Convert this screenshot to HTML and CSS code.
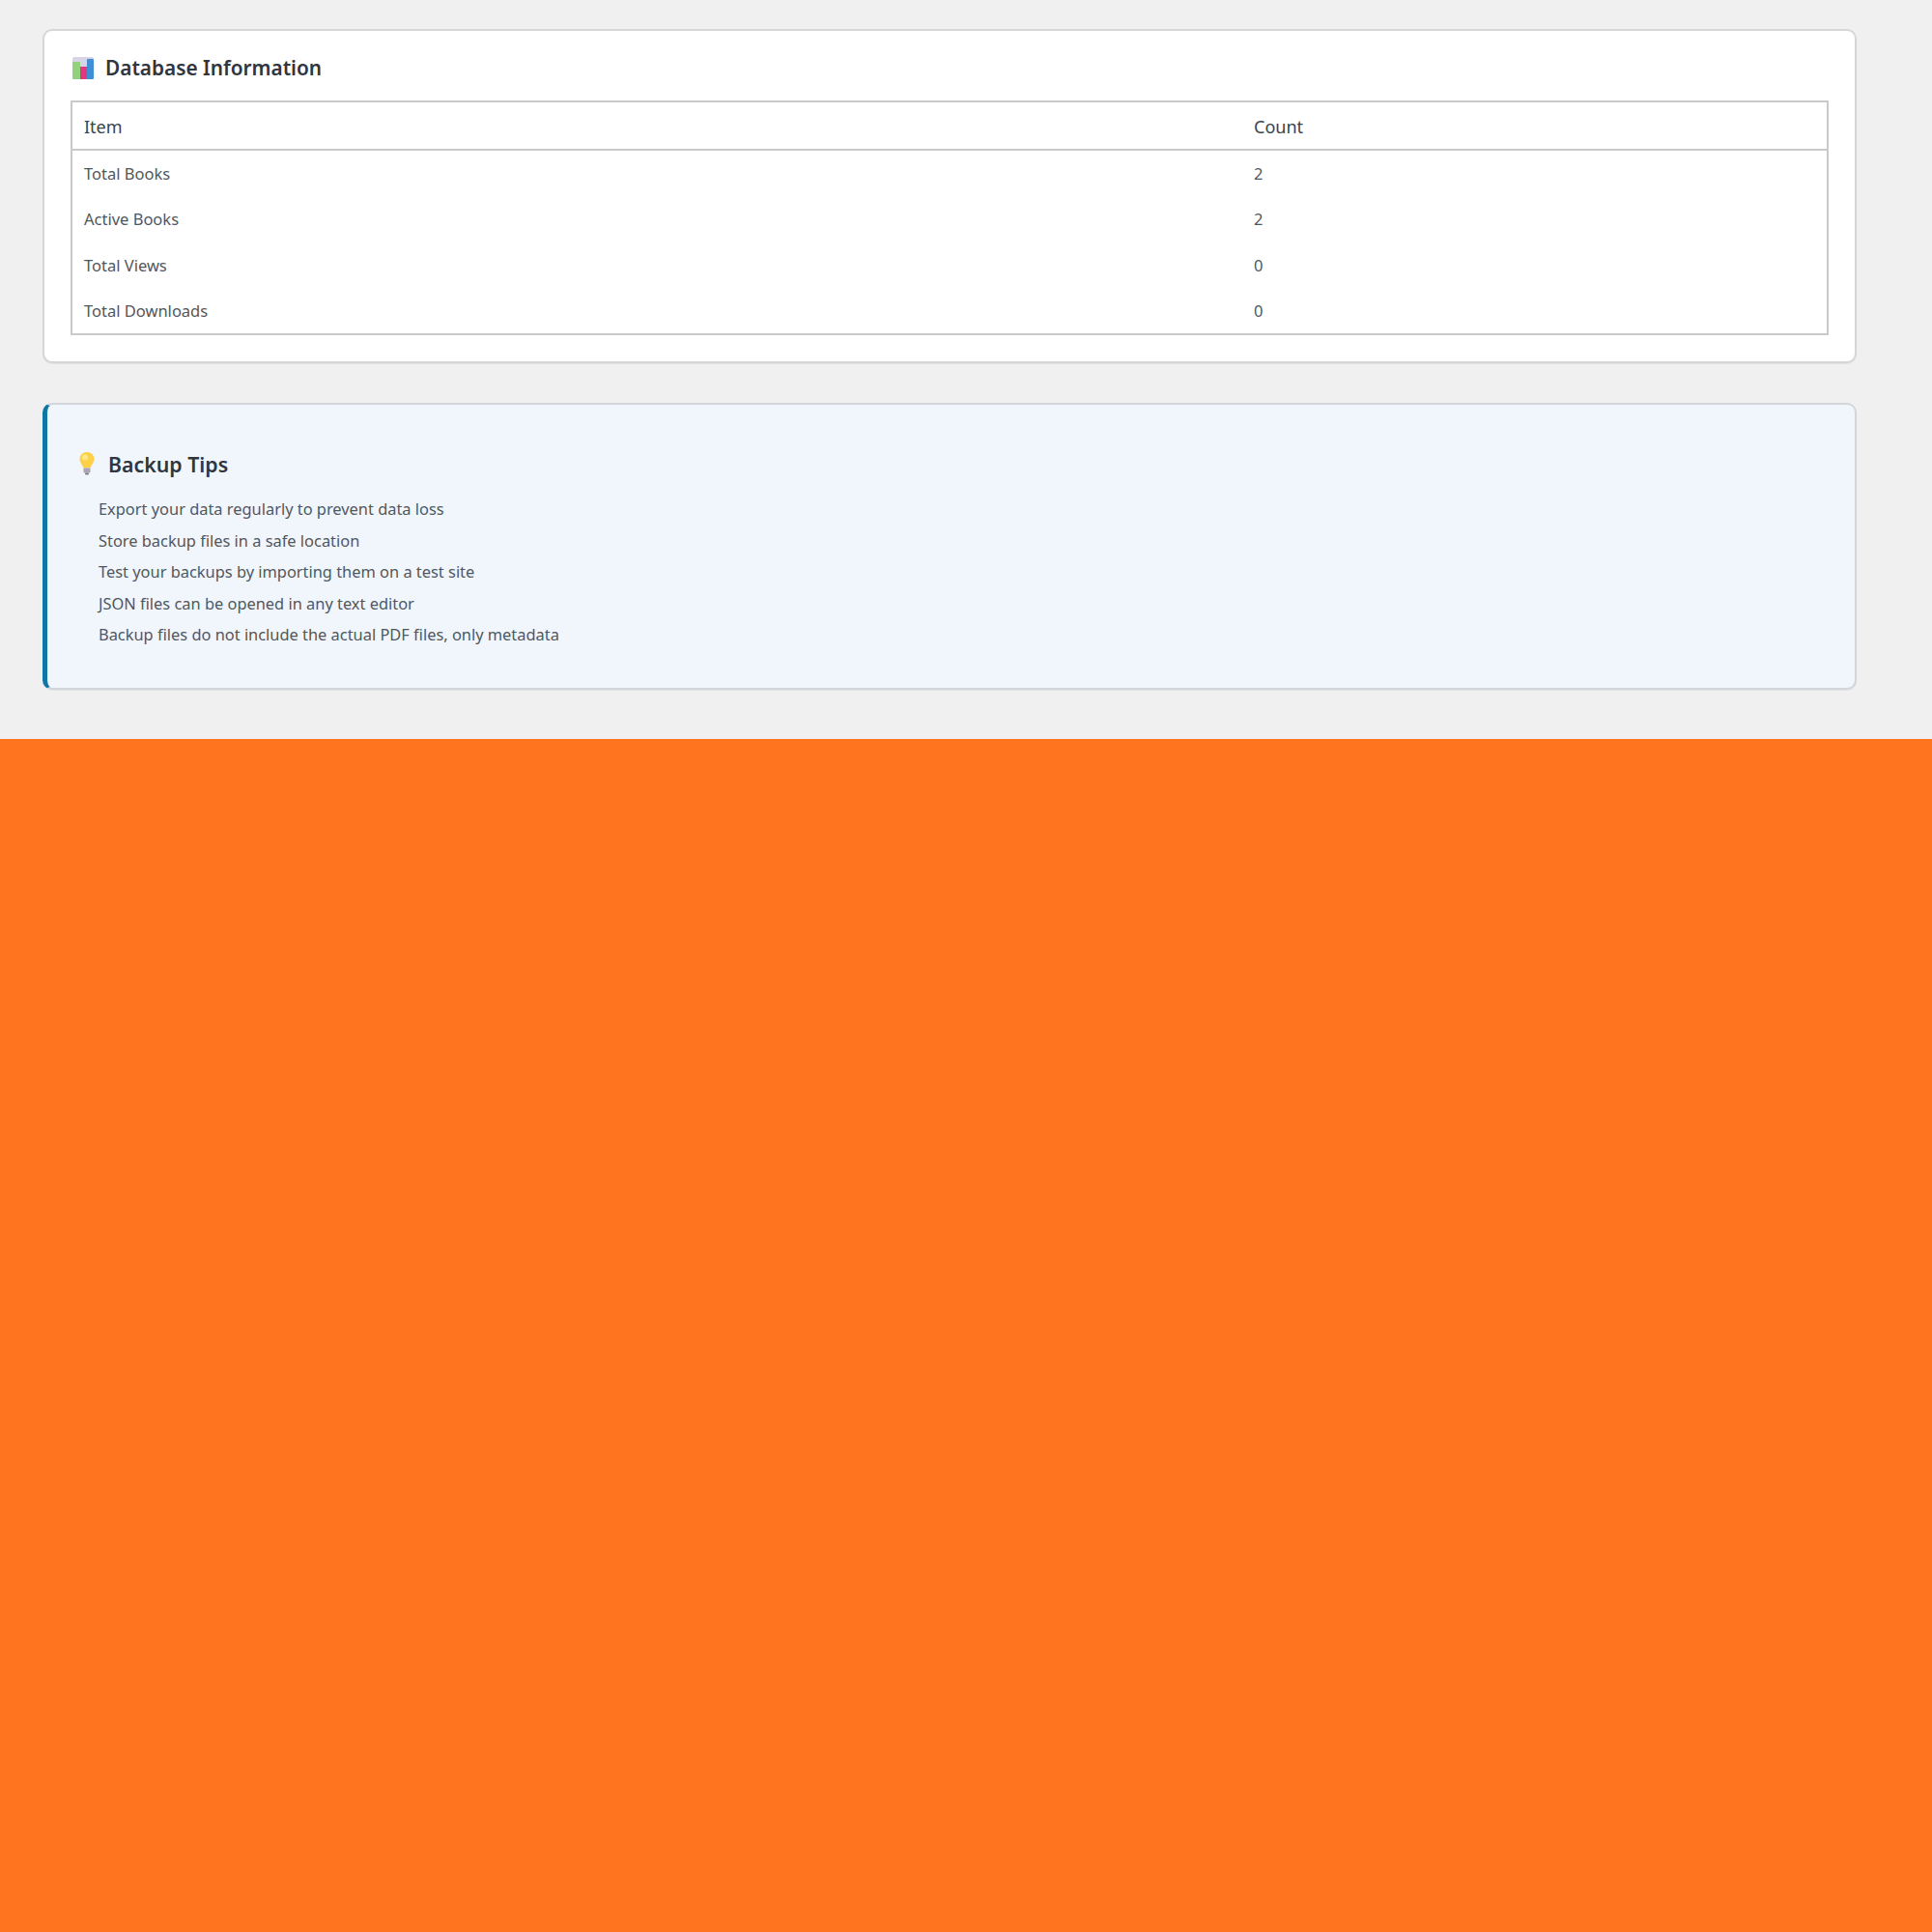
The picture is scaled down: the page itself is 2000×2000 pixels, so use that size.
FILE: index.html
```html
<!DOCTYPE html>
<html lang="en">
<head>
<meta charset="utf-8">
<title>Database Information</title>
<link rel="stylesheet" href="styles.css">
</head>
<body>
<main class="content">
  <section class="card">
    <h2 class="card-title">
      <svg class="icon-chart" viewBox="0 0 22 23" aria-hidden="true">
        <rect x="0" y="0" width="22" height="23" rx="2" fill="#d8d4e6"/>
        <rect x="0" y="5" width="8" height="18" rx="1" fill="#92d27e"/>
        <rect x="8" y="10" width="7" height="13" fill="#df3a80"/>
        <rect x="15" y="2" width="7" height="21" rx="1" fill="#3f8fd6"/>
      </svg>
      Database Information
    </h2>
    <table class="info-table">
      <thead>
        <tr><th class="col-item">Item</th><th>Count</th></tr>
      </thead>
      <tbody>
        <tr><td>Total Books</td><td>2</td></tr>
        <tr><td>Active Books</td><td>2</td></tr>
        <tr><td>Total Views</td><td>0</td></tr>
        <tr><td>Total Downloads</td><td>0</td></tr>
      </tbody>
    </table>
  </section>
  <section class="tips">
    <h3 class="tips-title">
      <svg class="icon-bulb" viewBox="0 0 16 24" aria-hidden="true">
        <path d="M8 0C3.600 0 .500 3.200 .500 7.200c0 3.600 3 5.600 3.700 9.300h7.600c.700-3.700 3.700-5.700 3.700-9.300C15.500 3.200 12.400 0 8 0z" fill="#fdd04a"/>
        <ellipse cx="6" cy="5.500" rx="3" ry="3" fill="#ffe88a"/>
        <rect x="4.500" y="16.500" width="7" height="5" rx="1" fill="#aaa4b4"/>
        <rect x="6" y="21.500" width="4" height="2" rx="1" fill="#7f7a8c"/>
      </svg>
      Backup Tips
    </h3>
    <ul class="tips-list">
      <li>Export your data regularly to prevent data loss</li>
      <li>Store backup files in a safe location</li>
      <li>Test your backups by importing them on a test site</li>
      <li>JSON files can be opened in any text editor</li>
      <li>Backup files do not include the actual PDF files, only metadata</li>
    </ul>
  </section>
</main>
<footer class="band"></footer>
</body>
</html>
```
FILE: styles.css
```css
* { box-sizing: border-box; }
html, body { margin: 0; padding: 0; }
body {
  background: #ff751f;
  font-family: "Noto Sans", "Open Sans", sans-serif;
  color: #50575e;
  min-height: 2000px;
}
.content {
  background: #f0f0f1;
  height: 765px;
  padding: 30px 78px 0 44px;
}
.card {
  background: #fff;
  border: 2px solid #d5d6d8;
  border-radius: 10px;
  box-shadow: 0 1px 1px rgba(0, 0, 0, .06);
  height: 346px;
  padding: 25px 27px 0;
}
.card-title {
  display: flex;
  align-items: center;
  gap: 12px;
  margin: 0 0 21px 2px;
  height: 26px;
  font-size: 20.800px;
  font-weight: 600;
  color: #2f3640;
}
.icon-chart { width: 22px; height: 23px; }
.info-table {
  width: 100%;
  border-collapse: collapse;
  border: 2px solid #c8c9cb;
  font-size: 16.500px;
}
.info-table th {
  text-align: left;
  font-weight: 400;
  color: #3c434a;
  height: 50px;
  padding: 2px 12px 0;
  font-size: 18px;
  border-bottom: 2px solid #c8c9cb;
}
.col-item { width: 1212px; }
.info-table td {
  height: 47.800px;
  padding: 0 12px;
}
.tips {
  margin-top: 41px;
  background: #f0f6fc;
  border: 2px solid #d2d6da;
  border-left: 5px solid #0f76a5;
  border-radius: 10px;
  box-shadow: 0 1px 1px rgba(0, 0, 0, .06);
  height: 297px;
  padding: 47px 28px 0;
}
.tips-title {
  display: flex;
  align-items: center;
  gap: 14px;
  margin: 0 0 17px;
  height: 28px;
  font-size: 21.300px;
  font-weight: 600;
  color: #2f3640;
}
.icon-bulb { width: 16px; height: 24px; margin-left: 5px; }
.tips-list {
  list-style: none;
  margin: 0;
  padding: 0 0 0 25px;
  font-size: 16.400px;
}
.tips-list li { height: 32.600px; line-height: 32.600px; }
.band { height: 1235px; background: #ff751f; }
```
